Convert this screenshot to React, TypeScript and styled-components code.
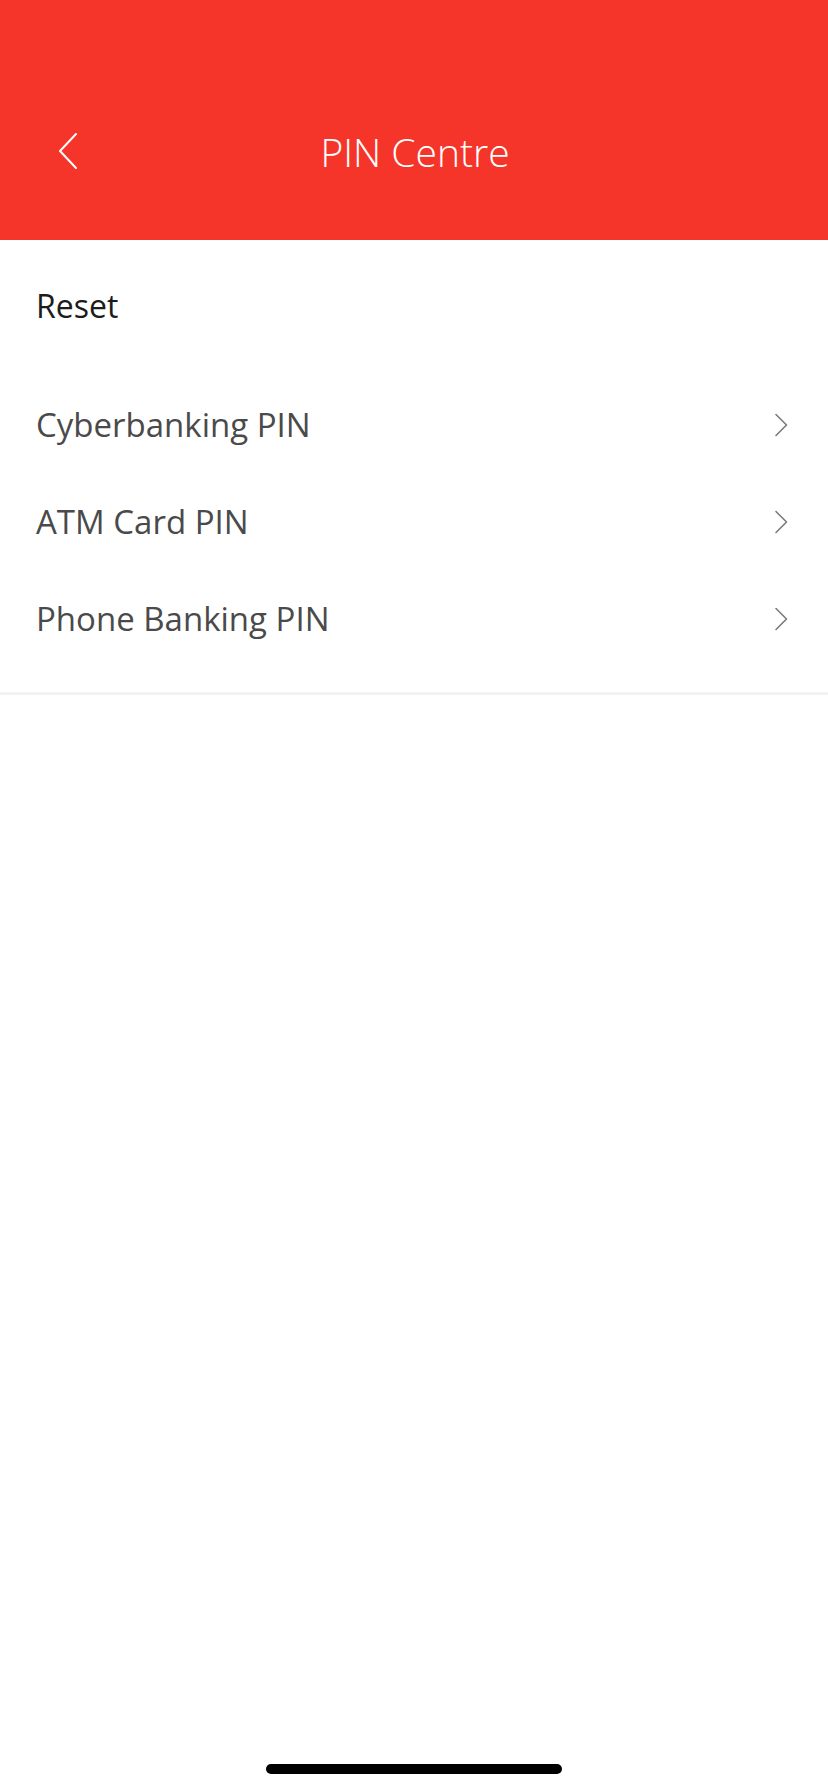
import React from 'react';
import styled, { createGlobalStyle } from 'styled-components';

const GlobalStyle = createGlobalStyle`
    html, body {
        margin: 0;
        padding: 0;
        background: #fff;
    }
    body {
        font-family: "Open Sans", "Noto Sans", sans-serif;
    }
`;

const ITEMS = ['Cyberbanking PIN', 'ATM Card PIN', 'Phone Banking PIN'];

// PIN 센터 페이지
function App() {
    return (
        <Page>
            <GlobalStyle />
            <Header>
                <NavBar>
                    <BackBtn aria-label="back">
                        <svg width="22" height="40" viewBox="0 0 22 40" fill="none">
                            <path d="M19 3 L3 20 L19 37" stroke="#fff" strokeWidth="2" strokeLinecap="round" strokeLinejoin="round" />
                        </svg>
                    </BackBtn>
                    <Title>PIN Centre</Title>
                </NavBar>
            </Header>
            <Section>
                <SectionTitle>Reset</SectionTitle>
                {ITEMS.map((item) => (
                    <Row key={item}>
                        <RowLabel>{item}</RowLabel>
                        <svg width="14" height="24" viewBox="0 0 14 24" fill="none">
                            <path d="M2 1.5 L12.5 12 L2 22.5" stroke="#7a7a7a" strokeWidth="1.6" strokeLinecap="round" strokeLinejoin="round" />
                        </svg>
                    </Row>
                ))}
            </Section>
            <Divider />
            <Spacer />
            <HomeBar />
        </Page>
    );
}

const Page = styled.div`
    width: 828px;
    height: 1792px;
    display: flex;
    flex-direction: column;
    background: #fff;
    overflow: hidden;
`;

const Header = styled.div`
    height: 240px;
    box-sizing: border-box;
    padding-top: 107px;
    background: #f6352a;
`;

const NavBar = styled.div`
    position: relative;
    height: 88px;
    display: flex;
    align-items: center;
    justify-content: center;
`;

const BackBtn = styled.button`
    position: absolute;
    left: 57px;
    top: 24px;
    padding: 0;
    border: 0;
    background: none;
    display: flex;
    cursor: pointer;
`;

const Title = styled.div`
    font-family: "Open Sans", sans-serif;
    font-weight: 300;
    font-size: 39px;
    color: #fff;
    margin-left: 2px;
`;

const Section = styled.div`
    padding: 0 36px 25px 36px;
`;

const SectionTitle = styled.div`
    height: 136px;
    box-sizing: border-box;
    padding-bottom: 6px;
    display: flex;
    align-items: center;
    font-size: 32px;
    color: #1c1c1c;
`;

const Row = styled.div`
    height: 97px;
    display: flex;
    align-items: center;
    justify-content: space-between;
    padding-right: 4px;
    cursor: pointer;
`;

const RowLabel = styled.span`
    font-size: 33px;
    color: #4a4a4a;
`;

const Divider = styled.div`
    height: 3px;
    background: #f2f2f2;
`;

const Spacer = styled.div`
    flex: 1;
`;

const HomeBar = styled.div`
    align-self: center;
    width: 296px;
    height: 10px;
    border-radius: 5px;
    background: #000;
    margin-bottom: 18px;
`;

export default App;
